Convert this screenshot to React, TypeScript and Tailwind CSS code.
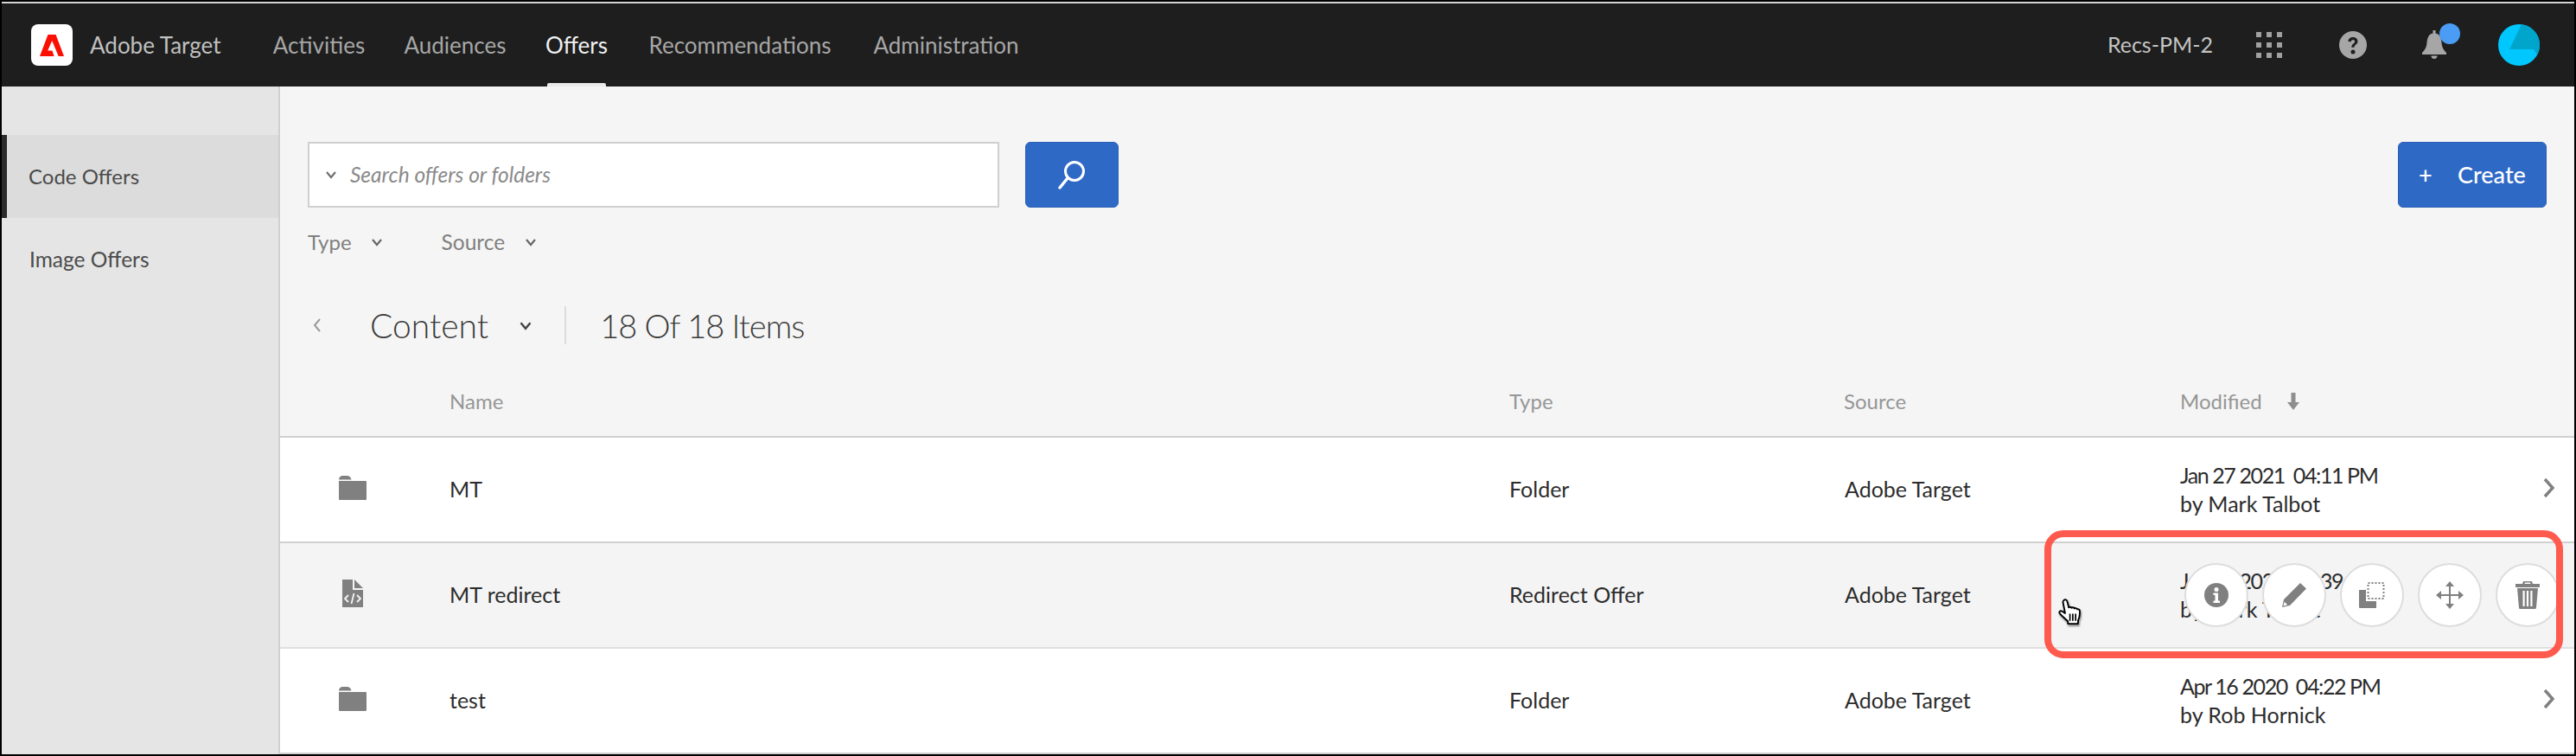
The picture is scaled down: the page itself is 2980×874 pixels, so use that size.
const rows = [
  { kind: 'folder', name: 'MT', type: 'Folder', date: 'Jan 27 2021  04:11 PM', by: 'by Mark Talbot' },
  { kind: 'code', name: 'MT redirect', type: 'Redirect Offer', date: 'Jan 27 2021  04:39 PM', by: 'by Mark Talbot' },
  { kind: 'folder', name: 'test', type: 'Folder', date: 'Apr 16 2020  04:22 PM', by: 'by Rob Hornick' },
]

const navItems = [
  { label: 'Activities', width: 'w-[102px]' },
  { label: 'Audiences', width: 'w-[117px]' },
  { label: 'Offers', width: 'w-[68px]', active: true },
  { label: 'Recommendations', width: 'w-[214px]' },
  { label: 'Administration', width: 'w-[167px]' },
]

function Chevron({ className = '' }: { className?: string }) {
  return (
    <svg viewBox="0 0 14 10" className={className} fill="none" stroke="currentColor" strokeWidth="2.2">
      <path d="M2 2l5 6 5-6" />
    </svg>
  )
}

function AdobeLogo() {
  return (
    <div className="w-[48px] h-[48px] rounded-[8px] bg-white flex items-center justify-center">
      <svg viewBox="0 0 28 25" className="w-[28px] h-[25px]" fill="#fa0f00">
        <path d="M9.5 0H18.5L28 25H21.7L14.2 7L9.2 18.5H14.4L16.6 25H0Z" />
      </svg>
    </div>
  )
}

function FolderIcon() {
  return (
    <svg viewBox="0 0 32 28" className="w-[32px] h-[28px]" fill="#808080">
      <path d="M0 4.5C0 2 2 0 4.5 0h5C12 0 14 2 14.5 4.500H0zM0 6h31a1 1 0 0 1 1 1v20a1 1 0 0 1-1 1H1a1 1 0 0 1-1-1z" />
    </svg>
  )
}

function CodeFileIcon() {
  return (
    <svg viewBox="0 0 24 32" className="w-[24px] h-[32px]">
      <path d="M0 0h12v12h12v20H0z" fill="#808080" />
      <path d="M14 0l10 10H14z" fill="#808080" />
      <path d="M7 18l-4 4 4 4M17 18l4 4-4 4M13.500 16l-3 12" fill="none" stroke="#f4f4f4" strokeWidth="1.800" />
    </svg>
  )
}

function InfoIcon() {
  return (
    <svg viewBox="0 0 28 28" className="w-[28px] h-[28px]">
      <circle cx="14" cy="14" r="14" fill="#808080" />
      <circle cx="14" cy="7.500" r="2.500" fill="#fff" />
      <path d="M10.500 11.500H16v9h2v2.500H10.500v-2.500h2v-6.500h-2z" fill="#fff" />
    </svg>
  )
}

function PencilIcon() {
  return (
    <svg viewBox="0 0 28 28" className="w-[28px] h-[28px]">
      <path d="M21 0l7 6.500L9 26 0 28l2-9z" fill="#808080" />
      <path d="M2.600 21.800l3.600 3.400-4.700 1.200z" fill="#fff" />
    </svg>
  )
}

function CopyIcon() {
  return (
    <svg viewBox="0 0 30 30" className="w-[30px] h-[30px]">
      <path d="M0 9h8v13h12v8H1a1 1 0 0 1-1-1z" fill="#808080" />
      <rect x="10.500" y="1" width="18" height="18" fill="none" stroke="#808080" strokeWidth="2" strokeDasharray="2 2" />
    </svg>
  )
}

function MoveIcon() {
  return (
    <svg viewBox="0 0 32 32" className="w-[32px] h-[32px]" fill="#808080">
      <path d="M15 6h2v9h9v2h-9v9h-2v-9H6v-2h9z" />
      <path d="M16 0l5 6H11zM16 32l-5-6h10zM0 16l6-5v10zM32 16l-6 5V11z" />
    </svg>
  )
}

function TrashIcon() {
  return (
    <svg viewBox="0 0 28 32" className="w-[28px] h-[32px]" fill="#808080">
      <path d="M9 0h10l1 3h8v4H0V3h8zM11 1.500L10.500 3h7L17 1.500z" />
      <path d="M2 8h24l-2 22.500a1.500 1.500 0 0 1-1.500 1.500h-17A1.500 1.500 0 0 1 4 30.500zM8.500 11v18h2.200V11zM12.900 11v18h2.200V11zM17.300 11v18h2.200V11z" fillRule="evenodd" />
    </svg>
  )
}

function HandCursor() {
  return (
    <svg viewBox="0 0 32 34" className="w-[30px] h-[33px] drop-shadow-[1px_2px_1px_rgba(0,0,0,0.45)]">
      <path
        d="M7 2.500c1.500-1.500 3.500-.5 4 1l2 8c1-1 3-1 3.500.5 1-1 3-.8 3.500.7 1-.8 3-.6 3.500 1 .8-.4 2.800-.2 3 1.500 .5 4-.3 9-2 12.500v3.800H12v-3c-3-3-7-6-10-9.500-1.500-2 .5-4 2.500-3l4 2.500L6 5.500c-.3-1-.2-2.200 1-3z"
        fill="#fff"
        stroke="#000"
        strokeWidth="2"
        strokeLinejoin="round"
      />
      <path d="M14.500 19v9M18 19v9M21.500 19v9" stroke="#000" strokeWidth="1.800" />
    </svg>
  )
}

const actions = [InfoIcon, PencilIcon, CopyIcon, MoveIcon, TrashIcon]

export default function App() {
  return (
    <div className="relative w-[2980px] h-[874px] overflow-hidden bg-black font-['Lato',sans-serif] border-x-2 border-black">
      <div className="h-[2px] bg-black" />
      <div className="h-[2px] bg-[#d4d4d4]" />

      <header className="h-[96px] bg-[#1e1e1e] flex items-center text-[#a6a6a6] text-[26px]">
        <div className="ml-[34px]">
          <AdobeLogo />
        </div>
        <span className="ml-[20px] w-[214px] text-[#c0c0c0] whitespace-nowrap">Adobe Target</span>
        <nav className="flex gap-[48px] h-full">
          {navItems.map((item) => (
            <div
              key={item.label}
              className={`relative flex items-center justify-center whitespace-nowrap ${item.width} ${item.active ? 'text-[#f0f0f0]' : ''}`}
            >
              {item.label}
              {item.active && <div className="absolute left-0 right-0 bottom-0 h-[4px] rounded-t-[2px] bg-[#eaeaea]" />}
            </div>
          ))}
        </nav>
        <div className="ml-auto flex items-center h-full">
          <span className="text-[#c4c4c4] text-[25px] whitespace-nowrap">Recs-PM-2</span>
          <div className="ml-[50px] grid grid-cols-3 gap-[6px]">
            {Array.from({ length: 9 }).map((_, i) => (
              <div key={i} className="w-[6px] h-[6px] bg-[#a0a0a0]" />
            ))}
          </div>
          <svg viewBox="0 0 32 32" className="ml-[66px] w-[32px] h-[32px]">
            <circle cx="16" cy="16" r="16" fill="#a6a6a6" />
            <path d="M10.500 12c0-3.200 2.500-5 5.500-5s5.500 1.700 5.500 4.800c0 3.800-4 3.600-4 7h-3.200c0-4.500 3.900-4.300 3.900-6.800 0-1.200-1-2-2.200-2-1.400 0-2.300 1-2.300 2.300z" fill="#1e1e1e" />
            <circle cx="16" cy="24" r="2.500" fill="#1e1e1e" />
          </svg>
          <div className="relative ml-[64px] w-[28px] h-[34px]">
            <svg viewBox="0 0 28 34" className="w-[28px] h-[34px]" fill="#a6a6a6">
              <path d="M12.500 0h3v3.500c5 1 6.500 5 7 11 .3 4 1.700 8 5.500 11.500v2H0v-2c3.800-3.500 5.200-7.500 5.500-11.500.5-6 2-10 7-11z" />
              <path d="M10.500 29.500h7a3.500 3.500 0 0 1-7 0z" />
            </svg>
            <div className="absolute left-[20px] top-[-8px] w-[24px] h-[24px] rounded-full bg-[#4b9cf5]" />
          </div>
          <svg viewBox="0 0 48 48" className="ml-[60px] mr-[40px] w-[48px] h-[48px]">
            <defs>
              <clipPath id="avatar">
                <circle cx="24" cy="24" r="24" />
              </clipPath>
            </defs>
            <circle cx="24" cy="24" r="24" fill="#00c8ff" />
            <path d="M13 29L27 0H48V40L41 29z" fill="#00a5cc" clipPath="url(#avatar)" />
          </svg>
        </div>
      </header>

      <div className="flex h-[772px]">
        <aside className="w-[322px] shrink-0 bg-[#e5e5e5] border-r-2 border-[#d0d0d0] pt-[56px] text-[24px] text-[#4b4b4b]">
          <div className="h-[96px] flex items-center bg-[#dcdcdc] border-l-[6px] border-[#2c2c2c] pl-[25px]">Code Offers</div>
          <div className="h-[96px] flex items-center pl-[32px] text-[24.500px]">Image Offers</div>
        </aside>

        <main className="flex-1 bg-[#f5f5f5] flex flex-col">
          <div className="px-[32px] pt-[64px]">
            <div className="flex justify-between">
              <div className="flex gap-[30px]">
                <div className="w-[800px] h-[76px] bg-white border-2 border-[#cfcfcf] flex items-center pl-[18px] text-[#8a8a8a]">
                  <Chevron className="w-[14px] h-[10px] text-[#707070]" />
                  <span className="ml-[15px] text-[24.500px] italic">Search offers or folders</span>
                </div>
                <button className="w-[108px] h-[76px] rounded-[6px] bg-[#2f69c6] border border-[#2a5fb4] flex items-center justify-center">
                  <svg viewBox="0 0 36 36" className="w-[36px] h-[36px]" fill="none" stroke="#fff">
                    <circle cx="21" cy="14" r="10.500" strokeWidth="3" />
                    <path d="M13 22L4 33" strokeWidth="3.500" strokeLinecap="round" />
                  </svg>
                </button>
              </div>
              <button className="w-[172px] h-[76px] rounded-[6px] bg-[#2f69c6] border border-[#2a5fb4] flex items-center pl-[23px] text-white text-[27px] font-medium">
                <span className="w-[45px] text-left">+</span>
                <span>Create</span>
              </button>
            </div>

            <div className="mt-[24px] h-[32px] flex items-center text-[24px] text-[#808080]">
              <span>Type</span>
              <Chevron className="ml-[22px] w-[14px] h-[10px] text-[#666666]" />
              <span className="ml-[68px] text-[24.500px]">Source</span>
              <Chevron className="ml-[23px] w-[14px] h-[10px] text-[#666666]" />
            </div>

            <div className="mt-[56px] h-[48px] flex items-center text-[#3a3a3a]">
              <svg viewBox="0 0 10 18" className="ml-[6px] w-[10px] h-[18px]" fill="none" stroke="#9a9a9a" strokeWidth="2">
                <path d="M8 2L2 9l6 7" />
              </svg>
              <span className="ml-[56px] text-[39px] font-light leading-none">Content</span>
              <Chevron className="ml-[35px] w-[16px] h-[11px] text-[#444444]" />
              <div className="ml-[37px] w-[2px] h-[44px] bg-[#dcdcdc]" />
              <span className="ml-[39px] text-[38px] tracking-[-1px] font-light leading-none">18 Of 18 Items</span>
            </div>
          </div>

          <div className="h-[106px] border-b-2 border-[#d0d0d0] grid grid-cols-[196px_1226px_387px_389px_1fr] items-center pt-[24px] text-[24px] text-[#969696]">
            <span />
            <span>Name</span>
            <span>Type</span>
            <span>Source</span>
            <span className="flex items-center">
              Modified
              <svg viewBox="0 0 16 20" className="ml-[28px] w-[16px] h-[20px]" fill="#8e8e8e">
                <path d="M5.500 0h5v11H15l-7 9-7-9h4.500z" />
              </svg>
            </span>
          </div>

          {rows.map((row, i) => (
            <div
              key={row.name}
              className={`relative h-[122px] border-b-2 grid grid-cols-[196px_1226px_388px_388px_1fr] items-center text-[25px] text-[#2c2c2c] ${
                i === 1 ? 'bg-[#f4f4f4] border-[#e0e0e0]' : 'bg-white border-[#d0d0d0]'
              }`}
            >
              <div className="flex justify-center pl-[7px] pb-[4px] pr-[35px]">
                {row.kind === 'folder' ? <FolderIcon /> : <CodeFileIcon />}
              </div>
              <span>{row.name}</span>
              <span>{row.type}</span>
              <span>Adobe Target</span>
              <div className="flex items-center">
                <div className="leading-[33px] whitespace-pre">
                  <div className="tracking-[-1.400px]">{row.date}</div>
                  <div>{row.by}</div>
                </div>
                {i !== 1 && (
                  <svg viewBox="0 0 14 24" className="absolute right-[22px] top-[46px] w-[14px] h-[24px]" fill="none" stroke="#808080" strokeWidth="3.500">
                    <path d="M2 2l9 10-9 10" />
                  </svg>
                )}
              </div>
              {i === 1 && (
                <div className="absolute left-[2203px] top-[23px] flex gap-[16px]">
                  {actions.map((Icon, n) => (
                    <div key={n} className="w-[74px] h-[74px] rounded-full bg-white border-2 border-[#dddddd] flex items-center justify-center">
                      <Icon />
                    </div>
                  ))}
                </div>
              )}
            </div>
          ))}
        </main>
      </div>

      <div className="h-[2px] bg-black" />

      <div className="absolute left-[2363px] top-[613px] w-[600px] h-[148px] rounded-[22px] border-[8px] border-[#fe5a4e]" />
      <div className="absolute left-[2379px] top-[691px]">
        <HandCursor />
      </div>
    </div>
  )
}
